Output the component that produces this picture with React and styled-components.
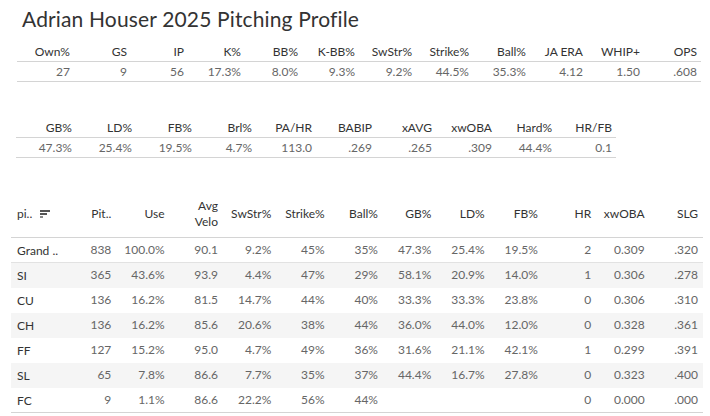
import React from 'react';
import styled, { createGlobalStyle } from 'styled-components';

const GlobalStyle = createGlobalStyle`
  body {
    margin: 0;
    background: #ffffff;
    font-family: Lato, "Open Sans", sans-serif;
  }
`;

const Page = styled.div`
  width: 710px;
  height: 416px;
  overflow: hidden;
  font-size: 12px;
`;

const Title = styled.h1`
  margin: 0;
  padding: 7px 0 0 22px;
  font-size: 21px;
  line-height: 24px;
  font-weight: 400;
  letter-spacing: 0.15px;
  color: #333333;
`;

const Summary = styled.div`
  display: grid;
  grid-template-columns: repeat(${(props) => props.$cols}, ${(props) => props.$colWidth}px);
  width: max-content;
  margin: ${(props) => props.$top}px 0 0 ${(props) => props.$left}px;
`;

const HeadCell = styled.div`
  height: 19px;
  line-height: 19px;
  padding-right: 4px;
  text-align: right;
  white-space: nowrap;
  color: #333333;
  border-bottom: 1px solid #d4d4d4;
`;

const ValueCell = styled(HeadCell)`
  color: #666666;
`;

const PitchTable = styled.div`
  margin: 32px 0 0 11px;
  width: 692px;
`;

const PitchRow = styled.div`
  display: grid;
  grid-template-columns: 51px repeat(12, 53.33px);
  align-items: center;
  height: ${(props) => (props.$head ? 47 : 24)}px;
  background: ${(props) => (props.$shaded ? '#f5f5f5' : 'transparent')};
  border-bottom: 1px solid ${(props) => props.$line || 'transparent'};
`;

const NameCell = styled.div`
  padding-left: 6px;
  color: #333333;
  white-space: nowrap;
  display: flex;
  align-items: center;
  gap: 8px;
`;

const NumCell = styled.div`
  padding-right: 4px;
  text-align: right;
  white-space: nowrap;
  line-height: 16px;
  color: ${(props) => (props.$head ? '#333333' : '#666666')};
`;

const SortIcon = () => (
  <svg width="10" height="8" viewBox="0 0 10 8">
    <rect x="0" y="0" width="10" height="2" fill="#555" />
    <rect x="0" y="3" width="7" height="2" fill="#555" />
    <rect x="0" y="6" width="3" height="2" fill="#888" />
  </svg>
);

const summaryOne = [
  ['Own%', '27'], ['GS', '9'], ['IP', '56'], ['K%', '17.3%'], ['BB%', '8.0%'],
  ['K-BB%', '9.3%'], ['SwStr%', '9.2%'], ['Strike%', '44.5%'], ['Ball%', '35.3%'],
  ['JA ERA', '4.12'], ['WHIP+', '1.50'], ['OPS', '.608'],
];

const summaryTwo = [
  ['GB%', '47.3%'], ['LD%', '25.4%'], ['FB%', '19.5%'], ['Brl%', '4.7%'],
  ['PA/HR', '113.0'], ['BABIP', '.269'], ['xAVG', '.265'], ['xwOBA', '.309'],
  ['Hard%', '44.4%'], ['HR/FB', '0.1'],
];

const pitchHeads = ['Pit..', 'Use', 'Avg\nVelo', 'SwStr%', 'Strike%', 'Ball%', 'GB%', 'LD%', 'FB%', 'HR', 'xwOBA', 'SLG'];

const pitches = [
  ['Grand ..', '838', '100.0%', '90.1', '9.2%', '45%', '35%', '47.3%', '25.4%', '19.5%', '2', '0.309', '.320'],
  ['SI', '365', '43.6%', '93.9', '4.4%', '47%', '29%', '58.1%', '20.9%', '14.0%', '1', '0.306', '.278'],
  ['CU', '136', '16.2%', '81.5', '14.7%', '44%', '40%', '33.3%', '33.3%', '23.8%', '0', '0.306', '.310'],
  ['CH', '136', '16.2%', '85.6', '20.6%', '38%', '44%', '36.0%', '44.0%', '12.0%', '0', '0.328', '.361'],
  ['FF', '127', '15.2%', '95.0', '4.7%', '49%', '36%', '31.6%', '21.1%', '42.1%', '1', '0.299', '.391'],
  ['SL', '65', '7.8%', '86.6', '7.7%', '35%', '37%', '44.4%', '16.7%', '27.8%', '0', '0.323', '.400'],
  ['FC', '9', '1.1%', '86.6', '22.2%', '56%', '44%', '', '', '', '0', '0.000', '.000'],
];

function SummaryTable({ items, colWidth, top, left }) {
  return (
    <Summary $cols={items.length} $colWidth={colWidth} $top={top} $left={left}>
      {items.map(([label]) => <HeadCell key={label}>{label}</HeadCell>)}
      {items.map(([label, value]) => <ValueCell key={label}>{value}</ValueCell>)}
    </Summary>
  );
}

export default function App() {
  return (
    <Page>
      <GlobalStyle />
      <Title>Adrian Houser 2025 Pitching Profile</Title>
      <SummaryTable items={summaryOne} colWidth={57} top={11} left={17} />
      <SummaryTable items={summaryTwo} colWidth={60} top={36} left={16} />
      <PitchTable>
        <PitchRow $head $line="#d4d4d4">
          <NameCell>pi.. <SortIcon /></NameCell>
          {pitchHeads.map((h) => (
            <NumCell $head key={h}>
              {h.split('\n').map((part) => <div key={part}>{part}</div>)}
            </NumCell>
          ))}
        </PitchRow>
        {pitches.map((row, i) => (
          <PitchRow
            key={row[0]}
            $shaded={i % 2 === 1}
            $line={i === 0 ? '#e2e2e2' : i === pitches.length - 1 ? '#d4d4d4' : undefined}
          >
            <NameCell>{row[0]}</NameCell>
            {row.slice(1).map((v, j) => <NumCell key={j}>{v}</NumCell>)}
          </PitchRow>
        ))}
      </PitchTable>
    </Page>
  );
}
